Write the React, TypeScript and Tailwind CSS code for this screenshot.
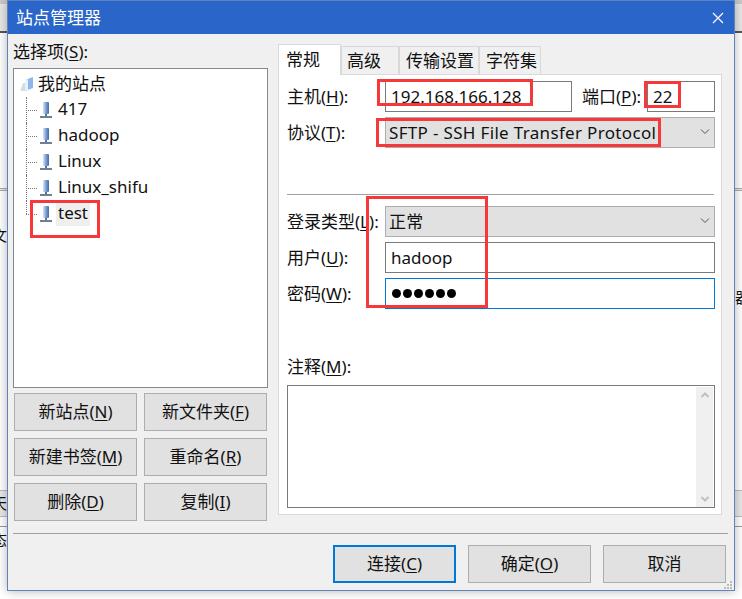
import React from "react";

const font = { fontFamily: '"Noto Sans", "Noto Sans CJK SC", sans-serif' };

function Key({ k }: { k: string }) {
  return <span className="underline underline-offset-2 decoration-1">{k}</span>;
}

function Lbl({ cn, k, tail = "):" }: { cn: string; k: string; tail?: string }) {
  return (
    <span className="whitespace-nowrap">
      {cn}(<Key k={k} />{tail}
    </span>
  );
}

function Btn({ cn, k, focus }: { cn: string; k?: string; focus?: boolean }) {
  return (
    <button
      className={
        "h-[38px] w-[123px] shrink-0 bg-[#e1e1e1] pb-px text-[#111] " +
        (focus ? "border-[2px] border-[#0078d7]" : "border border-[#adadad]")
      }
    >
      {k ? <Lbl cn={cn} k={k} tail=")" /> : cn}
    </button>
  );
}

function Chevron() {
  return (
    <svg width="12" height="8" viewBox="0 0 12 8" className="text-[#555]">
      <path d="M2 1.5 L6 5.5 L10 1.5" fill="none" stroke="currentColor" strokeWidth="1" />
    </svg>
  );
}

function SiteIcon() {
  return (
    <svg width="14" height="18" viewBox="0 0 14 18" className="shrink-0">
      <defs>
        <linearGradient id="site" x1="0" x2="1" y1="0" y2="0">
          <stop offset="0" stopColor="#dbe6f5" />
          <stop offset="0.5" stopColor="#7d9fd3" />
          <stop offset="1" stopColor="#3f6bb0" />
        </linearGradient>
      </defs>
      <rect x="4" y="1" width="6" height="12" rx="1" fill="url(#site)" />
      <rect x="6" y="13" width="2" height="2" fill="#5c6f8c" />
      <rect x="1" y="15" width="12" height="2" fill="#6d7f9b" />
    </svg>
  );
}

function FolderIcon() {
  return (
    <svg width="14" height="16" viewBox="0 0 14 16" className="shrink-0">
      <path d="M0.5 14 L3 7 L7 7 L7 15 L1 15 Z" fill="#d5dbe2" />
      <path d="M5 4 L13 1 L13 12 L5 15 Z" fill="#8db6ea" />
      <path d="M5 4 L8 3 L8 14 L5 15 Z" fill="#e8f0fb" />
    </svg>
  );
}

function TreeRow({ name, last, hover }: { name: string; last?: boolean; hover?: boolean }) {
  return (
    <div className="relative flex h-[26px] items-center pl-[19px]">
      <span className={"absolute left-[6px] top-0 w-0 border-l border-dotted border-[#777] " + (last ? "h-[13px]" : "h-[26px]")} />
      <span className="absolute left-[6px] top-[13px] h-0 w-[11px] border-t border-dotted border-[#777]" />
      <SiteIcon />
      <span className={"ml-[3px] px-[2px] pb-[2px] leading-[22px] " + (hover ? "bg-[#efefef]" : "")}>{name}</span>
    </div>
  );
}

function Field({ children, className }: { children: React.ReactNode; className?: string }) {
  return (
    <div className={"flex h-[31px] items-center border border-[#7a7a7a] bg-white pb-px pl-[5px] " + className}>{children}</div>
  );
}

function Select({ value, className }: { value: string; className?: string }) {
  return (
    <div className={"flex h-[31px] items-center justify-between border border-[#adadad] bg-[#e1e1e1] pb-px pl-[3px] pr-[3px] " + className}>
      <span className="whitespace-nowrap tracking-[0.33px]">{value}</span>
      <Chevron />
    </div>
  );
}

function Tab({ label, w, active }: { label: string; w: string; active?: boolean }) {
  return (
    <div
      className={
        "flex items-center border border-b-0 border-[#d9d9d9] " +
        w +
        (active ? " relative z-10 -mb-px h-[31px] bg-white pb-[2px]" : " h-[28px] bg-[#f0f0f0]")
      }
    >
      {label}
    </div>
  );
}

// red marks someone drew on top of the screenshot
function Mark({ className }: { className: string }) {
  return <div className={"pointer-events-none absolute z-20 border-[3px] border-[#f73838] " + className} />;
}

export default function App() {
  return (
    <div className="relative h-[599px] w-[742px] overflow-hidden bg-white text-[17px] leading-none text-[#111]" style={font}>
      {/* bits of the main window showing behind the dialog */}
      <div className="absolute left-0 top-0 h-[32px] w-full border-t-[4px] border-[#c8c8c8] bg-[#e8e8e8]" />
      <div className="absolute left-0 top-[31px] h-[2px] w-full bg-[#555]" />
      <div className="absolute left-0 top-[188px] h-[3px] w-full border-y border-[#aaa] bg-[#e8e8e8]" />
      <div className="absolute left-[-8px] top-[228px] text-[15px] leading-none">文</div>
      <div className="absolute left-0 top-[490px] h-[27px] w-full border-y border-[#bbb] bg-[#e8e8e8]" />
      <div className="absolute left-[-8px] top-[496px] text-[15px] leading-none">天</div>
      <div className="absolute left-0 top-[526px] h-px w-full bg-[#999]" />
      <div className="absolute left-[-8px] top-[533px] text-[15px] leading-none">态</div>
      <div className="absolute left-[735px] top-[290px] text-[15px] leading-none">器</div>

      {/* dialog */}
      <div className="relative ml-[7px] flex h-[591px] w-[728px] flex-col border border-[#5f83bd] bg-[#f0f0f0] shadow-[0_0_10px_rgba(0,0,0,0.3)]">
        <div className="flex h-[33px] shrink-0 items-center justify-between bg-[#2a66c9] pl-[8px] pr-[8px] text-white">
          <span>站点管理器</span>
          <svg width="12" height="12" viewBox="0 0 12 12" className="mr-[2px]">
            <path d="M1 1 L11 11 M11 1 L1 11" stroke="#fff" strokeWidth="1.2" />
          </svg>
        </div>

        <div className="flex flex-1 flex-col pl-[5px] pr-[5px]">
          <div className="flex h-[498px] shrink-0">
            {/* left column */}
            <div className="flex w-[255px] shrink-0 flex-col">
              <div className="flex h-[34px] shrink-0 items-center">
                <Lbl cn="选择项" k="S" />
              </div>
              <div className="h-[320px] shrink-0 border border-[#828790] bg-white pl-[6px] pt-[2px]">
                <div className="flex h-[26px] items-center">
                  <FolderIcon />
                  <span className="ml-[4px] pb-[2px]">我的站点</span>
                </div>
                <TreeRow name="417" />
                <TreeRow name="hadoop" />
                <TreeRow name="Linux" />
                <TreeRow name="Linux_shifu" />
                <TreeRow name="test" last hover />
              </div>
              <div className="mt-[5px] grid grid-cols-[123px_123px] gap-x-[7px] gap-y-[7px] pl-px">
                <Btn cn="新站点" k="N" />
                <Btn cn="新文件夹" k="F" />
                <Btn cn="新建书签" k="M" />
                <Btn cn="重命名" k="R" />
                <Btn cn="删除" k="D" />
                <Btn cn="复制" k="I" />
              </div>
            </div>

            {/* right column */}
            <div className="ml-[10px] flex w-[444px] shrink-0 flex-col pt-[10px]">
              <div className="flex h-[30px] shrink-0 items-end">
                <Tab label="常规" w="w-[63px] pl-[7px]" active />
                <Tab label="高级" w="w-[58px] pl-[5px]" />
                <Tab label="传输设置" w="w-[80px] pl-[6px]" />
                <Tab label="字符集" w="w-[62px] pl-[6px]" />
              </div>
              <div className="flex h-[441px] shrink-0 flex-col border border-[#d9d9d9] bg-white pl-[8px] pr-[6px] pt-[6px]">
                <div className="flex h-[31px] items-center">
                  <span className="w-[98px] shrink-0 pb-px"><Lbl cn="主机" k="H" /></span>
                  <Field className="w-[187px] shrink-0">192.168.166.128</Field>
                  <span className="ml-[10px] w-[65px] shrink-0 pb-px"><Lbl cn="端口" k="P" /></span>
                  <Field className="w-[68px] shrink-0">22</Field>
                </div>
                <div className="mt-[5px] flex h-[31px] items-center">
                  <span className="w-[98px] shrink-0 pb-px"><Lbl cn="协议" k="T" /></span>
                  <Select value="SFTP - SSH File Transfer Protocol" className="w-[330px] shrink-0" />
                </div>
                <div className="mt-[46px] h-px w-[427px] shrink-0 bg-[#a0a0a0]" />
                <div className="mt-[11px] flex h-[31px] items-center">
                  <span className="w-[98px] shrink-0 pb-px"><Lbl cn="登录类型" k="L" /></span>
                  <Select value="正常" className="w-[330px] shrink-0" />
                </div>
                <div className="mt-[5px] flex h-[31px] items-center">
                  <span className="w-[98px] shrink-0 pb-px"><Lbl cn="用户" k="U" /></span>
                  <Field className="w-[330px] shrink-0">hadoop</Field>
                </div>
                <div className="mt-[5px] flex h-[31px] items-center">
                  <span className="w-[98px] shrink-0 pb-px"><Lbl cn="密码" k="W" /></span>
                  <div className="flex h-[31px] w-[330px] shrink-0 items-center gap-[2px] border border-[#0078d7] pl-[6px]">
                    {[0, 1, 2, 3, 4, 5].map((i) => (
                      <span key={i} className="h-[9px] w-[9px] rounded-full bg-black" />
                    ))}
                  </div>
                </div>
                <div className="mt-[49px] h-[18px] shrink-0"><Lbl cn="注释" k="M" /></div>
                <div className="mt-[9px] flex h-[123px] w-[428px] shrink-0 justify-end border border-[#7a7a7a] bg-white pr-px pt-px">
                  <div className="flex h-[120px] w-[17px] flex-col items-center justify-between bg-[#f0f0f0] py-[4px] text-[#c0c0c0]">
                    <svg width="10" height="8" viewBox="0 0 10 8"><path d="M1.5 6 L5 2.5 L8.5 6" fill="none" stroke="currentColor" strokeWidth="2" /></svg>
                    <svg width="10" height="8" viewBox="0 0 10 8"><path d="M1.5 2 L5 5.5 L8.5 2" fill="none" stroke="currentColor" strokeWidth="2" /></svg>
                  </div>
                </div>
              </div>
            </div>
          </div>

          <div className="mt-[1px] h-px w-[715px] shrink-0 bg-[#a0a0a0]" />
          <div className="mt-[11px] flex gap-[12px] pl-[320px]">
            <Btn cn="连接" k="C" focus />
            <Btn cn="确定" k="O" />
            <Btn cn="取消" />
          </div>
        </div>

        {/* resize grip */}
        <svg width="9" height="8" viewBox="0 0 9 8" className="absolute bottom-[1px] right-[1px] text-[#bbb]">
          <path d="M6 0h2v2h-2zM3 3h2v2h-2zM6 3h2v2h-2zM0 6h2v2h-2zM3 6h2v2h-2zM6 6h2v2h-2z" fill="currentColor" />
        </svg>
      </div>

      <Mark className="left-[377px] top-[79px] h-[27px] w-[156px]" />
      <Mark className="left-[644px] top-[81px] h-[27px] w-[37px]" />
      <Mark className="left-[376px] top-[118px] h-[29px] w-[285px]" />
      <Mark className="left-[366px] top-[196px] h-[112px] w-[122px]" />
      <Mark className="left-[30px] top-[200px] h-[38px] w-[70px]" />
    </div>
  );
}
